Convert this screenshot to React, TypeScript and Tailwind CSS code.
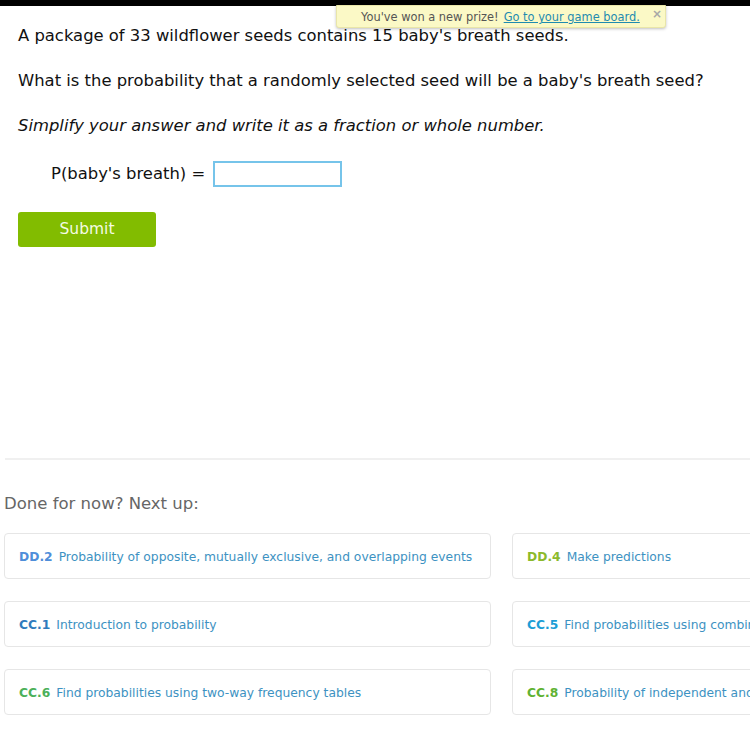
import React from 'react';

interface Skill {
  code: string;
  title: string;
  codeColor: string;
}

const skills: Skill[] = [
  { code: 'DD.2', title: 'Probability of opposite, mutually exclusive, and overlapping events', codeColor: 'text-[#4f8ed9]' },
  { code: 'DD.4', title: 'Make predictions', codeColor: 'text-[#8cba2c]' },
  { code: 'CC.1', title: 'Introduction to probability', codeColor: 'text-[#2f7bbd]' },
  { code: 'CC.5', title: 'Find probabilities using combinations and permutations', codeColor: 'text-[#1c9ed6]' },
  { code: 'CC.6', title: 'Find probabilities using two-way frequency tables', codeColor: 'text-[#4bb05a]' },
  { code: 'CC.8', title: 'Probability of independent and dependent events', codeColor: 'text-[#5fb233]' },
];

const SkillCard: React.FC<{ skill: Skill }> = ({ skill }) => (
  <div className="h-[46px] border border-[#e6e6e6] rounded-[4px] bg-white flex items-center px-[14px] pt-[2px] whitespace-nowrap overflow-hidden text-[12.3px]">
    <span className={`font-bold ${skill.codeColor}`}>{skill.code}</span>
    <span className="ml-[6px] text-[#3d92c2]">{skill.title}</span>
  </div>
);

export default function App() {
  return (
    <div className="relative w-[750px] h-[750px] overflow-hidden bg-white font-['DejaVu_Sans',Verdana,sans-serif] text-[#111]">
      <div className="h-[6px] bg-black" />

      {/* prize banner */}
      <div className="absolute left-[336px] top-[5px] w-[330px] h-[23px] bg-[#fbf9c6] border border-[#e9e6a8] rounded-b-[3px] shadow-[0_1px_3px_rgba(0,0,0,0.25)] flex items-center pl-[24px] pt-[3px] text-[11.4px]">
        <span className="text-[#555]">You've won a new prize!</span>
        <span className="ml-[5px] text-[#1f8bb0] underline">Go to your game board.</span>
        <span className="absolute right-[3px] top-[-1px] text-[#a8a8a8] font-bold text-[12px]">×</span>
      </div>

      <div className="pl-[18px] pt-[19px] text-[16.4px]">
        <p className="leading-[22px]">A package of 33 wildflower seeds contains 15 baby's breath seeds.</p>
        <p className="leading-[22px] mt-[23px]">What is the probability that a randomly selected seed will be a baby's breath seed?</p>
        <p className="leading-[22px] mt-[23px] italic">Simplify your answer and write it as a fraction or whole number.</p>

        <div className="flex items-center mt-[24px] pl-[33px] h-[26px]">
          <span className="leading-[22px]">P(baby's breath) =</span>
          <div className="ml-[8px] w-[129px] h-[26px] border-2 border-[#76c4ea]" />
        </div>

        <button className="mt-[25px] w-[138px] h-[35px] rounded-[3px] bg-[#82bc00] text-[#f4fbe4] text-[15.5px]">Submit</button>
      </div>

      <div className="mt-[211px] ml-[5px] h-[2px] bg-[#f0f0f0]" />

      <div className="pl-[4px]">
        <h2 className="mt-[33px] text-[16.5px] text-[#666] leading-[22px]">Done for now? Next up:</h2>
        <div className="mt-[18px] grid grid-cols-[487px_487px] gap-x-[21px] gap-y-[22px]">
          {skills.map((s) => (
            <SkillCard key={s.code} skill={s} />
          ))}
        </div>
      </div>
    </div>
  );
}
